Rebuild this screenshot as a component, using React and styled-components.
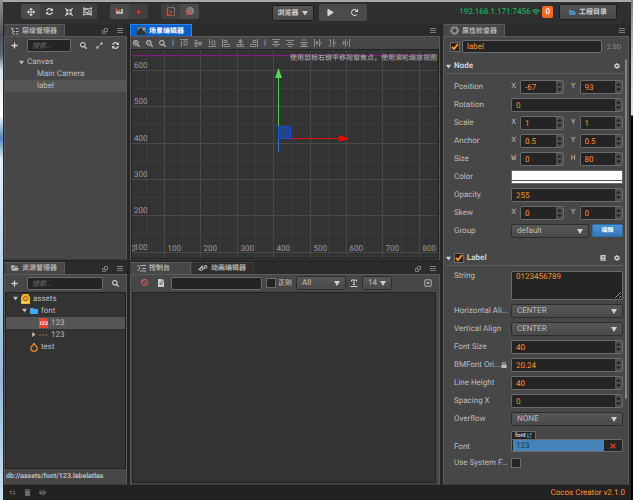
import React, { useId, useState } from "react";
import styled, { createGlobalStyle, css } from "styled-components";
import {
  FaArrowsAlt,
  FaBan,
  FaBook,
  FaCog,
  FaCompressArrowsAlt,
  FaExpandAlt,
  FaExternalLinkAlt,
  FaEye,
  FaFileAlt,
  FaFolder,
  FaFolderOpen,
  FaLock,
  FaPlay,
  FaPlus,
  FaRedo,
  FaRegCaretSquareDown,
  FaRegObjectGroup,
  FaRetweet,
  FaSearch,
  FaSearchMinus,
  FaSearchPlus,
  FaSyncAlt,
  FaTimes,
  FaTrash,
  FaWifi,
} from "react-icons/fa";

const GlobalStyle = createGlobalStyle`
  * {
    box-sizing: border-box;
  }
  body {
    margin: 0;
    background-color: #262626;
    text-rendering: geometricPrecision;
  }
  body, button, input, select, textarea {
    font-family: Roboto, "Noto Sans CJK SC", sans-serif;
    font-size: 8px;
    line-height: 10px;
  }
  button, input, select, textarea {
    margin: 0;
    padding: 0;
    text-rendering: inherit;
  }
  svg {
    display: block;
    flex: none;
  }
`;

/* the desktop shows through on both sides of the window */
const Desktop = styled.div`
  height: 100vh;
  padding: 0 2px 0 3px;
  background-image: linear-gradient(
      #7d8082,
      #c9c9c9 60px,
      #e4e4e4 115px,
      #050505 116px
    ),
    linear-gradient(
      #8a9296,
      #4c555e 35px,
      #5d6873 55px,
      #d8e6f0 70px,
      #fff 115px,
      #4a86c0 138px,
      #e6f0fa 160px,
      #bcd6f0 260px,
      #8fb8e2 380px,
      #cfe2f0
    );
  background-repeat: no-repeat;
  background-size: 2px 100%, 3px 100%;
  background-position: right, left;
`;

const Window = styled.div`
  height: 100%;
  display: flex;
  flex-direction: column;
  color: #bdbdbd;
  background-color: #262626;
  border-top: 2px solid #a3a9a7;
  overflow: hidden;
`;

/* top bar */

const TopBar = styled.header`
  height: 22px;
  flex: none;
  display: grid;
  grid-template-columns: 1fr auto 1fr;
  align-items: start;
  padding: 2px 14px 0 18px;
  background-color: #2f2f2f;
`;

const TopGroup = styled.div`
  display: flex;
  align-items: center;
  gap: ${(props) => props.$gap || 0}px;
  justify-content: ${(props) => (props.$end ? "flex-end" : "flex-start")};
`;

const ToolSet = styled.div`
  display: flex;
  border-radius: 2px;
  overflow: hidden;
  background-color: #4b4b4b;
`;

const Tool = styled.button`
  width: ${(props) => props.$width || 19}px;
  height: ${(props) => props.$height || 15}px;
  display: flex;
  align-items: center;
  justify-content: center;
  border: none;
  color: #d6d6d6;
  background-color: ${(props) => (props.$active ? "#404040" : "transparent")};
`;

const PushButton = styled.button`
  height: 16px;
  display: flex;
  align-items: center;
  justify-content: center;
  gap: 3px;
  padding: 0 ${(props) => props.$pad || 5}px;
  border: 1px solid #1d1d1d;
  border-radius: 2px;
  color: #cfcfcf;
  font-size: 7px;
  font-weight: 700;
  background-image: linear-gradient(#555, #484848);
`;

const Address = styled.span`
  color: #1cbf6b;
`;

const Count = styled.span`
  height: 12px;
  margin-right: 4px;
  padding: 0 3px;
  border-radius: 2px;
  color: #fff;
  font-weight: 500;
  line-height: 12px;
  background-color: #f26a22;
`;

/* panels */

const Workspace = styled.main`
  flex: 1;
  min-height: 0;
  display: grid;
  grid-template-columns: minmax(0, 123fr) minmax(0, 310fr) minmax(0, 186fr);
  gap: 3px;
  padding: 0 2px 0 1px;
`;

const Column = styled.div`
  min-height: 0;
  display: grid;
  grid-template-rows: ${(props) => props.$rows || "minmax(0, 1fr)"};
  gap: 2px;
`;

const Panel = styled.section`
  min-height: 0;
  display: flex;
  flex-direction: column;
`;

const TabBar = styled.div`
  height: 12px;
  flex: none;
  display: flex;
  align-items: stretch;
  background-color: #2b2b2b;
`;

const Tab = styled.button`
  display: flex;
  align-items: center;
  gap: 3px;
  padding: 0 ${(props) => props.$pad || 7}px 0 6px;
  border: 1px solid #5a5a5a;
  border-bottom: none;
  border-left-color: #3c3c3c;
  color: #b2b2b2;
  font-size: 7px;
  font-weight: 700;
  white-space: nowrap;
  background-color: #474747;
  ${(props) =>
    props.$focused &&
    css`
      color: #fff;
      border-color: #2a86e8;
      background-color: #0a60c8;
    `}
  ${(props) =>
    props.$idle &&
    css`
      border-color: #3d3d3d;
      background-color: #303030;
    `}
`;

const TabTools = styled.div`
  margin-left: auto;
  display: flex;
  align-items: center;
  gap: 9px;
  padding: 2px 4px 0 0;
  color: #7c7c7c;
`;

const Body = styled.div`
  position: relative;
  flex: 1;
  min-height: 0;
  display: flex;
  flex-direction: column;
  border: 1px solid #5a5a5a;
  border-bottom-color: #3a3a3a;
  background-color: #474747;
`;

const SearchBar = styled.div`
  height: 17px;
  flex: none;
  display: flex;
  align-items: center;
  gap: 9px;
  padding: 0 7px 0 6px;
  color: #d2d2d2;
`;

const IconButton = styled.button`
  flex: none;
  display: flex;
  border: none;
  color: ${(props) => props.$color || "inherit"};
  background: none;
`;

const Field = styled.input`
  flex: 1;
  min-width: 0;
  width: 100%;
  height: 13px;
  padding: 0 4px;
  border: 1px solid #6b6b6b;
  border-radius: 2px;
  outline: none;
  color: #fd942b;
  background-color: #242424;
  &::placeholder {
    color: #6b6b6b;
    font-size: 7px;
    font-style: italic;
  }
`;

const Tree = styled.ul`
  flex: 1;
  margin: 0;
  padding: 2px 0;
  list-style: none;
  ${(props) =>
    props.$dark &&
    css`
      padding: 0;
      border: 1px solid #222;
      background-color: #333;
    `}
`;

const Node = styled.li`
  height: 12px;
  display: flex;
  align-items: center;
  gap: 3px;
  padding-left: ${(props) => props.$indent}px;
  background-color: ${(props) => (props.$selected ? "#555" : "transparent")};
`;

const PathLine = styled.div`
  height: 15px;
  flex: none;
  padding: 0 1px;
  font-size: 7px;
  font-weight: 700;
  line-height: 15px;
  white-space: nowrap;
`;

/* scene */

const SceneTools = styled.div`
  height: 12px;
  flex: none;
  display: flex;
  align-items: center;
  gap: 6px;
  padding: 0 2px;
  color: #bdbdbd;
`;

const Canvas = styled.div`
  position: relative;
  flex: 1;
  min-height: 0;
  border: 1px solid #222;
  background-color: #333;
`;

const Hint = styled.div`
  position: absolute;
  top: 3px;
  right: 1px;
  color: #a2a2a2;
  font-size: 7px;
  font-weight: 500;
  white-space: nowrap;
`;

/* console */

const ConsoleTools = styled.div`
  height: 17px;
  flex: none;
  display: flex;
  align-items: center;
  gap: 4px;
  padding: 0 7px 0 10px;
`;

const ConsoleIcons = styled.div`
  display: flex;
  gap: 9px;
  margin-right: 2px;
`;

const ConsoleEnd = styled.div`
  display: flex;
  padding-left: 28px;
`;

const Log = styled.div`
  flex: 1;
  margin: 0 3px 1px 1px;
  border: 1px solid #232323;
  background-color: #333;
`;

/* inspector */

const NameRow = styled.div`
  height: 19px;
  display: flex;
  align-items: center;
  gap: 2px;
  padding: 0 7px 0 6px;
  color: #8e8e8e;
`;

const Dimension = styled.span`
  padding-left: 3px;
  font-size: 7px;
`;

const Heading = styled.h2`
  height: 15px;
  margin: ${(props) => props.$top || 3}px 5px ${(props) => props.$bottom || 4}px 2px;
  padding: 0 3px 0 0;
  display: flex;
  align-items: center;
  gap: 3px;
  border-bottom: 1px solid #606060;
  color: #cfcfcf;
  font-size: 8px;
  font-weight: 700;
`;

const HeadTools = styled.span`
  margin-left: auto;
  display: flex;
  gap: 8px;
`;

const Row = styled.div`
  min-height: ${(props) => props.$height || 18}px;
  display: grid;
  grid-template-columns: 57px minmax(0, 1fr);
  align-items: ${(props) => props.$align || "center"};
  padding: 0 5px 0 10px;
`;

const RowLabel = styled.label`
  display: flex;
  align-items: center;
  justify-content: space-between;
  padding-right: 4px;
  white-space: nowrap;
`;

const Pair = styled.div`
  display: grid;
  grid-template-columns: 9px minmax(0, 1fr) 16px minmax(0, 1fr);
  align-items: center;
`;

const Axis = styled.label`
  padding-right: 4px;
  font-family: "Liberation Mono", monospace;
  text-align: right;
`;

const Spin = styled.div`
  height: 14px;
  display: flex;
  border: 1px solid #6b6b6b;
  border-radius: 2px;
  background-color: #242424;
  ${Field} {
    height: 12px;
    border: none;
  }
`;

const SpinArrows = styled.span`
  width: 7px;
  flex: none;
  display: flex;
  align-items: center;
  justify-content: center;
  color: #1b1b1b;
  background-color: #505050;
`;

const SelectBox = styled.div`
  position: relative;
  flex: none;
  width: ${(props) => (props.$width ? `${props.$width}px` : "100%")};
  select {
    width: 100%;
    height: 14px;
    padding: 0 5px;
    border: 1px solid #2c2c2c;
    border-radius: 2px;
    appearance: none;
    color: #bdbdbd;
    background-image: linear-gradient(#565656, #4a4a4a);
  }
  svg {
    position: absolute;
    top: 5px;
    right: 6px;
    pointer-events: none;
  }
`;

const GroupField = styled.div`
  display: grid;
  grid-template-columns: minmax(0, 78fr) minmax(0, 31fr);
  gap: 3px;
`;

const EditButton = styled.button`
  height: 13px;
  border: 1px solid #2f6da6;
  border-radius: 2px;
  color: #fff;
  font-size: 6px;
  font-weight: 700;
  background-image: linear-gradient(#4a93d4, #3577b3);
`;

const ColorWell = styled.button`
  width: 100%;
  height: 14px;
  display: flex;
  flex-direction: column;
  border: 1px solid #6b6b6b;
  background-color: #fff;
  &::after {
    content: "";
    width: 100%;
    margin-top: auto;
    height: 2px;
    border-top: 1px solid #555;
  }
`;

const TextArea = styled.textarea`
  width: 100%;
  height: 29px;
  display: block;
  padding: 0 4px;
  border: 1px solid #6b6b6b;
  border-radius: 2px;
  outline: none;
  color: #fd942b;
  background-color: #242424;
  resize: vertical;
`;

const Check = styled.input`
  width: 10px;
  height: 10px;
  flex: none;
  appearance: none;
  border: 1px solid #6b6b6b;
  background-color: #242424;
`;

const CheckWrap = styled.span`
  position: relative;
  display: flex;
  svg {
    position: absolute;
    inset: 0;
    pointer-events: none;
  }
`;

const CheckLabel = styled.label`
  display: flex;
  align-items: center;
  gap: 2px;
  font-size: 7px;
  font-weight: 500;
`;

const AssetField = styled.div`
  display: flex;
  flex-direction: column;
  align-items: flex-start;
`;

const AssetTag = styled.span`
  height: 8px;
  display: flex;
  align-items: center;
  gap: 1px;
  padding: 0 3px;
  border: 1px solid #6b6b6b;
  border-bottom: none;
  border-radius: 2px 2px 0 0;
  color: #e2e2e2;
  font-size: 6px;
  font-weight: 500;
  line-height: 6px;
  background-color: #242424;
`;

const AssetSlot = styled.div`
  width: 100%;
  height: 13px;
  display: flex;
  align-items: stretch;
  padding: 0 5px 0 1px;
  border: 1px solid #6b6b6b;
  border-radius: 0 2px 2px 2px;
  background-color: #242424;
  ${Field} {
    height: 11px;
    padding: 0 3px;
    border: none;
    border-radius: 0;
    color: #17324c;
    background-color: #4683b8;
  }
  button {
    align-items: center;
    padding-left: 5px;
  }
`;

const Thumb = styled.div`
  position: absolute;
  top: 22px;
  right: 1px;
  width: 2px;
  height: 76%;
  border-radius: 1px;
  background-color: #858585;
`;

const StatusBar = styled.footer`
  height: 15px;
  flex: none;
  display: flex;
  align-items: center;
  gap: 8px;
  padding: 0 6px;
  color: #6f6f6f;
  background-color: #222;
`;

const Version = styled.span`
  margin-left: auto;
  color: #fd942b;
`;

const Caret = ({ right, size = 5 }) => (
  <svg width={size} height={size} viewBox="0 0 6 6" fill="currentColor">
    <path d={right ? "M1.5 0v6L5.5 3z" : "M0 1h6L3 5.5z"} />
  </svg>
);

const DownIcon = () => (
  <svg width="6" height="5" viewBox="0 0 6 5" fill="#cfcfcf">
    <path d="M0 0h6L3 5z" />
  </svg>
);

const PopIcon = () => (
  <svg width="6" height="6" viewBox="0 0 6 6" fill="none" stroke="currentColor">
    <path d="M2.5.5h3v3h-3zM2 2.5H.5v3h3V4" />
  </svg>
);

const MenuIcon = () => (
  <svg width="6" height="6" viewBox="0 0 6 6" stroke="currentColor">
    <path d="M0 .5h6M0 2.5h6M0 4.5h6" />
  </svg>
);

const TreeIcon = () => (
  <svg width="8" height="8" viewBox="0 0 8 8" fill="none" stroke="currentColor">
    <path d="M0 1.5h3M1.5 2v5M2 4.5h2M2 7h2M5 1.5h3M5 4.5h3M5 7h3" strokeDasharray="2 .5" />
  </svg>
);

const SceneIcon = () => (
  <svg width="9" height="8" viewBox="0 0 9 8">
    <path d="M0 0h9v8H0z" fill="#67717c" />
    <path d="M0 8V4l2-1 1-2 2 1 1 2 2 1 1 3z" fill="#2e3338" />
    <circle cx="7" cy="2" r="1" fill="#aeb6bd" />
  </svg>
);

const ConsoleIcon = () => (
  <svg width="9" height="8" viewBox="0 0 9 8" fill="none" stroke="currentColor">
    <path d="M.5 1l2.5 3L.5 7M3 1.5h6M5 4.5h4M3 7h6" />
  </svg>
);

const AnimIcon = () => (
  <svg width="10" height="8" viewBox="0 0 10 8" fill="none" stroke="currentColor">
    <path d="M0 5.5h2L4 1.5l1 4 3-4" />
    <circle cx="3" cy="5" r="1.5" />
    <circle cx="7.5" cy="3" r="1.5" />
  </svg>
);

const GearIcon = () => (
  <svg width="9" height="9" viewBox="0 0 9 9" fill="none" stroke="currentColor">
    <circle cx="4.5" cy="4.5" r="3.700" strokeWidth="1.2" strokeDasharray="1.5 .8" />
    <circle cx="4.5" cy="4.5" r="2.700" strokeWidth=".8" />
  </svg>
);

const TextSizeIcon = () => (
  <svg width="8" height="8" viewBox="0 0 8 8" fill="none" stroke="#cfcfcf">
    <path d="M1.500 2.500V1h5v1.500M4 1v5M3 5.500h2M.5 7.500h7" />
  </svg>
);

const GizmoIcon = ({ kind }) => (
  <svg width="9" height="9" viewBox="0 0 9 9" fill="none">
    {kind === "pivot" && (
      <>
        <path d="M1 4h3V3h1v1h1V2h2v5H1z" fill="#b4b4b4" />
        <path d="M0 2.5h3M1.5 1v3M4 4.5h2" stroke="#e8412c" />
      </>
    )}
    {kind === "center" && (
      <>
        <path d="M1 5.5h7" stroke="#8f3a32" />
        <path d="M4.5 3v4M3 5h3" stroke="#e8412c" />
      </>
    )}
    {kind === "local" && (
      <>
        <path d="M1.500.5h7v8h-7z" stroke="#8f8f8f" strokeDasharray="1.5 1" />
        <path d="M1.500 2v6.500H6" stroke="#e8412c" strokeWidth="1.5" />
        <circle cx="5" cy="5" r="1" fill="#e8412c" />
      </>
    )}
    {kind === "world" && (
      <>
        <circle cx="5" cy="4" r="3.5" fill="#777" stroke="#8c8c8c" />
        <path d="M2 3v5.5M2 5.5h4M4 8l2-2" stroke="#e8412c" />
      </>
    )}
  </svg>
);

const alignShapes = [
  "M0 .5h8M1.5 2v6M4 2h3v4H4z",
  "M0 4.5h8M1 1.5h2v6H1zM5 3h2v3H5z",
  "M0 7.5h8M1.5 0v6M4 2h3v4H4z",
  "M.5 0v8M2 1.5h3v2H2zM2 5.5h6v2H2z",
  "M4.5 0v8M3 1.5h3v2H3zM1 5.5h7v2H1z",
  "M7.5 0v8M3 1.5h3v2H3zM0 5.5h6v2H0z",
];

const spreadShapes = [
  "M0 .5h8M2 2.5h4v1H2zM0 5.5h8M2 7h4",
  "M0 1.5h8M2 3.5h4M0 5.5h8M2 7.5h4",
  "M2 1h4M0 3.5h8M2 5h4v1H2zM0 7.5h8",
  "M.5 0v8M2.5 2.5h1v3h-1zM5.5 0v8M7 2.5v3",
  "M1.5 0v1.5h1v5h-1V8M5.5 0v8M7 2.5v3",
  "M1 2.5h1v3H1zM3.5 0v8M5.5 2.5v3M7.5 0v8",
];

const AlignIcon = ({ d }) => (
  <svg width="8" height="8" viewBox="0 0 8 8" fill="none" stroke="#8b8b8b">
    <path d={d} />
  </svg>
);

const DatabaseIcon = () => (
  <svg width="9" height="10" viewBox="0 0 9 10">
    <path d="M2 0h5l2 3v7H0V3z" fill="#f0b429" />
    <circle cx="4.5" cy="4.5" r="2" fill="none" stroke="#8a5a10" />
    <path d="M1 8.5h7" stroke="#fbe08d" />
  </svg>
);

const FontAssetIcon = () => (
  <svg width="9" height="10" viewBox="0 0 9 10">
    <path d="M0 0h7l2 2v8H0z" fill="#e9412f" />
    <text x="4.5" y="7" textAnchor="middle" fill="#fff" fontSize="5" fontWeight="700">
      123
    </text>
  </svg>
);

const FireIcon = () => (
  <svg width="8" height="10" viewBox="0 0 8 10" fill="none" stroke="#f0852a" strokeWidth="1.3">
    <path d="M4 1c0 2-3.2 3-3.2 5.2C.8 8 2.3 9.2 4 9.2S7.2 8 7.2 6.2C7.2 4.5 5 3.5 4 1z" />
  </svg>
);

const PanelTools = ({ single }) => (
  <TabTools>
    {!single && <PopIcon />}
    <MenuIcon />
  </TabTools>
);

const CheckBox = ({ label, ...rest }) => {
  const [on, setOn] = useState(!!rest.checked);
  return (
    <CheckWrap>
      <Check
        type="checkbox"
        id={rest.id}
        aria-label={label}
        checked={on}
        onChange={(e) => setOn(e.target.checked)}
      />
      {on && (
        <svg width="10" height="10" viewBox="0 0 10 10" fill="none" stroke="#fd942b" strokeWidth="2">
          <path d="M2 5l2 2 4-5" />
        </svg>
      )}
    </CheckWrap>
  );
};

const NumberBox = ({ id, value }) => (
  <Spin>
    <Field id={id} defaultValue={value} />
    <SpinArrows>
      <svg width="5" height="10" viewBox="0 0 5 10" fill="currentColor">
        <path d="M0 3.5h5L2.5 1zM0 6.5h5L2.5 9z" />
      </svg>
    </SpinArrows>
  </Spin>
);

const NumberRow = ({ label, value, locked }) => {
  const id = useId();
  return (
    <Row>
      <RowLabel htmlFor={id}>
        {label}
        {locked && <FaLock size={6} />}
      </RowLabel>
      <NumberBox id={id} value={value} />
    </Row>
  );
};

const PairRow = ({ label, names, values }) => {
  const id = useId();
  return (
    <Row>
      <RowLabel as="span">{label}</RowLabel>
      <Pair>
        <Axis htmlFor={`${id}a`}>{names[0]}</Axis>
        <NumberBox id={`${id}a`} value={values[0]} />
        <Axis htmlFor={`${id}b`}>{names[1]}</Axis>
        <NumberBox id={`${id}b`} value={values[1]} />
      </Pair>
    </Row>
  );
};

const Select = ({ id, value, width, label }) => (
  <SelectBox $width={width}>
    <select id={id} aria-label={label} defaultValue={value}>
      <option>{value}</option>
    </select>
    <DownIcon />
  </SelectBox>
);

const SelectRow = ({ label, value }) => {
  const id = useId();
  return (
    <Row>
      <RowLabel htmlFor={id}>{label}</RowLabel>
      <Select id={id} value={value} />
    </Row>
  );
};

const TopTools = () => (
  <TopBar>
    <TopGroup $gap={13}>
      <ToolSet>
        <Tool aria-label="move"><FaArrowsAlt size={8} /></Tool>
        <Tool aria-label="rotate" $active><FaSyncAlt size={7} /></Tool>
        <Tool aria-label="scale" $active><FaCompressArrowsAlt size={8} /></Tool>
        <Tool aria-label="rect" $active><FaRegObjectGroup size={9} /></Tool>
      </ToolSet>
      <ToolSet>
        <Tool aria-label="pivot"><GizmoIcon kind="pivot" /></Tool>
        <Tool aria-label="center" $active><GizmoIcon kind="center" /></Tool>
      </ToolSet>
      <ToolSet>
        <Tool aria-label="local" $active><GizmoIcon kind="local" /></Tool>
        <Tool aria-label="world"><GizmoIcon kind="world" /></Tool>
      </ToolSet>
    </TopGroup>
    <TopGroup $gap={5}>
      <PushButton>
        浏览器
        <Caret size={6} />
      </PushButton>
      <ToolSet>
        <Tool aria-label="play" $width={24} $height={17}><FaPlay size={7} /></Tool>
        <Tool aria-label="reload" $width={24} $height={17}><FaRedo size={7} /></Tool>
      </ToolSet>
    </TopGroup>
    <TopGroup $gap={2} $end>
      <Address>192.168.1.171:7456</Address>
      <FaWifi size={8} color="#1cbf6b" />
      <Count>0</Count>
      <PushButton $pad={9}>
        <FaFolderOpen size={7} color="#4a9be8" />
        工程目录
      </PushButton>
    </TopGroup>
  </TopBar>
);

const Hierarchy = () => (
  <Panel>
    <TabBar>
      <Tab><TreeIcon />层级管理器</Tab>
      <PanelTools />
    </TabBar>
    <Body>
      <SearchBar>
        <IconButton aria-label="add"><FaPlus size={7} /></IconButton>
        <Field aria-label="search" placeholder="搜索..." />
        <IconButton aria-label="find"><FaSearch size={7} /></IconButton>
        <IconButton aria-label="expand"><FaExpandAlt size={7} /></IconButton>
        <IconButton aria-label="refresh"><FaSyncAlt size={7} /></IconButton>
      </SearchBar>
      <Tree>
        <Node $indent={14}><Caret />Canvas</Node>
        <Node $indent={32}>Main Camera</Node>
        <Node $indent={32} $selected>label</Node>
      </Tree>
    </Body>
  </Panel>
);

const Assets = () => (
  <Panel>
    <TabBar>
      <Tab><FaFolderOpen size={8} />资源管理器</Tab>
      <PanelTools />
    </TabBar>
    <Body>
      <SearchBar>
        <IconButton aria-label="add"><FaPlus size={7} /></IconButton>
        <Field aria-label="search" placeholder="搜索..." />
        <IconButton aria-label="find"><FaSearch size={7} /></IconButton>
      </SearchBar>
      <Tree $dark>
        <Node $indent={7}><Caret /><DatabaseIcon />assets</Node>
        <Node $indent={16}><Caret /><FaFolder size={8} color="#3fa9f5" />font</Node>
        <Node $indent={33} $selected><FontAssetIcon />123</Node>
        <Node $indent={25}>
          <Caret right />
          <svg width="9" height="2" viewBox="0 0 9 2" stroke="#a8713c">
            <path d="M0 1h9" strokeDasharray="2 1" />
          </svg>
          123
        </Node>
        <Node $indent={24}><FireIcon />test</Node>
      </Tree>
      <PathLine>db://assets/font/123.labelatlas</PathLine>
    </Body>
  </Panel>
);

const xMarks = [100, 200, 300, 400, 500, 600, 700, 800];
const yMarks = [600, 500, 400, 300, 200, 100];

const Scene = () => (
  <Panel>
    <TabBar>
      <Tab $focused><SceneIcon />场景编辑器</Tab>
      <PanelTools single />
    </TabBar>
    <Body>
      <SceneTools>
        <IconButton aria-label="zoom in"><FaSearchPlus size={7} /></IconButton>
        <IconButton aria-label="zoom out"><FaSearchMinus size={7} /></IconButton>
        <IconButton aria-label="zoom reset"><FaSearch size={7} /></IconButton>
        <span>|</span>
        {alignShapes.map((d) => (
          <AlignIcon key={d} d={d} />
        ))}
        <span>|</span>
        {spreadShapes.map((d) => (
          <AlignIcon key={d} d={d} />
        ))}
      </SceneTools>
      <Canvas>
        <svg width="100%" height="100%" fontSize="8" fill="#9c9c9c">
          {xMarks.map((n, i) => {
            const x = Math.round(32 + i * 36.4) + 0.5;
            return (
              <g key={n}>
                <path d={`M${x} 0V400`} stroke="#484848" />
                <path d={`M${x - 18} 0V400`} stroke="#3b3b3b" />
                <text x={x + 3} y="201">{n}</text>
              </g>
            );
          })}
          {yMarks.map((n, i) => {
            const y = Math.round(20 + i * 36.3) + 0.5;
            return (
              <g key={n}>
                <path d={`M0 ${y}H1200`} stroke="#484848" />
                <path d={`M0 ${y + 18}H1200`} stroke="#3b3b3b" />
                <text x="2" y={y - 3}>{n}</text>
              </g>
            );
          })}
          <text x="-1" y="201">0</text>
          <path d="M0 5.5H1200" stroke="#7a1f7a" strokeWidth="1.5" />
          <path d="M146.5 89V102" stroke="#2a7ad0" />
          <path d="M146.5 76V28" stroke="#4ccf4c" />
          <path d="M143 28l3.5-10 3.5 10z" fill="#4fdc4f" />
          <path d="M159 88.5h50" stroke="#e01010" />
          <path d="M207 85v7l10-3.5z" fill="#f00" />
          <path d="M146.5 76.5h12v12h-12z" fill="#23438a" stroke="#1450d2" />
        </svg>
        <Hint>使用鼠标右键平移视窗焦点，使用滚轮缩放视图</Hint>
      </Canvas>
    </Body>
  </Panel>
);

const Console = () => (
  <Panel>
    <TabBar>
      <Tab $pad={20}><ConsoleIcon />控制台</Tab>
      <Tab $idle><AnimIcon />动画编辑器</Tab>
      <PanelTools />
    </TabBar>
    <Body>
      <ConsoleTools>
        <ConsoleIcons>
          <IconButton aria-label="clear" $color="#e0605a"><FaBan size={7} /></IconButton>
          <IconButton aria-label="log file" $color="#cfcfcf"><FaFileAlt size={8} /></IconButton>
        </ConsoleIcons>
        <Field aria-label="filter" />
        <CheckLabel>
          <CheckBox />
          正则
        </CheckLabel>
        <Select label="level" value="All" width={50} />
        <TextSizeIcon />
        <Select label="font size" value="14" width={30} />
        <ConsoleEnd><FaRegCaretSquareDown size={8} color="#cfcfcf" /></ConsoleEnd>
      </ConsoleTools>
      <Log />
    </Body>
  </Panel>
);

const Inspector = () => (
  <Panel>
    <TabBar>
      <Tab><GearIcon />属性检查器</Tab>
      <PanelTools single />
    </TabBar>
    <Body>
      <NameRow>
        <CheckBox label="active" checked />
        <Field aria-label="name" defaultValue="label" />
        <Dimension>2.5D</Dimension>
      </NameRow>
      <Heading>
        <Caret />
        Node
        <HeadTools><FaCog size={6} /></HeadTools>
      </Heading>
      <PairRow label="Position" names="XY" values={["-67", "93"]} />
      <NumberRow label="Rotation" value="0" />
      <PairRow label="Scale" names="XY" values={["1", "1"]} />
      <PairRow label="Anchor" names="XY" values={["0.5", "0.5"]} />
      <PairRow label="Size" names="WH" values={["0", "80"]} />
      <Row>
        <RowLabel htmlFor="color">Color</RowLabel>
        <ColorWell id="color" />
      </Row>
      <NumberRow label="Opacity" value="255" />
      <PairRow label="Skew" names="XY" values={["0", "0"]} />
      <Row>
        <RowLabel htmlFor="group">Group</RowLabel>
        <GroupField>
          <Select id="group" value="default" />
          <EditButton>编辑</EditButton>
        </GroupField>
      </Row>
      <Heading $top={11} $bottom={5}>
        <Caret />
        <CheckBox label="Label" checked />
        Label
        <HeadTools>
          <FaBook size={6} />
          <FaCog size={6} />
        </HeadTools>
      </Heading>
      <Row $height={31} $align="start">
        <RowLabel htmlFor="string">String</RowLabel>
        <TextArea id="string" defaultValue="0123456789" />
      </Row>
      <SelectRow label="Horizontal Ali..." value="CENTER" />
      <SelectRow label="Vertical Align" value="CENTER" />
      <NumberRow label="Font Size" value="40" />
      <NumberRow label="BMFont Ori..." value="20.24" locked />
      <NumberRow label="Line Height" value="40" />
      <NumberRow label="Spacing X" value="0" />
      <SelectRow label="Overflow" value="NONE" />
      <Row $height={24} $align="end">
        <RowLabel htmlFor="font">Font</RowLabel>
        <AssetField>
          <AssetTag>font<FaExternalLinkAlt size={5} color="#4a9be8" /></AssetTag>
          <AssetSlot>
            <Field id="font" defaultValue="123" />
            <IconButton aria-label="remove" $color="#d8392b"><FaTimes size={8} /></IconButton>
          </AssetSlot>
        </AssetField>
      </Row>
      <Row $height={22}>
        <RowLabel htmlFor="system">Use System F...</RowLabel>
        <CheckBox id="system" />
      </Row>
      <Thumb />
    </Body>
  </Panel>
);

const App = () => {
  return (
    <>
      <GlobalStyle />
      <Desktop>
        <Window>
          <TopTools />
          <Workspace>
            <Column $rows="minmax(0, 235fr) minmax(0, 223fr)">
              <Hierarchy />
              <Assets />
            </Column>
            <Column $rows="minmax(0, 235fr) minmax(0, 223fr)">
              <Scene />
              <Console />
            </Column>
            <Column>
              <Inspector />
            </Column>
          </Workspace>
          <StatusBar>
            <FaRetweet size={7} />
            <FaTrash size={7} />
            <FaEye size={7} />
            <Version>Cocos Creator v2.1.0</Version>
          </StatusBar>
        </Window>
      </Desktop>
    </>
  );
};

export default App;
